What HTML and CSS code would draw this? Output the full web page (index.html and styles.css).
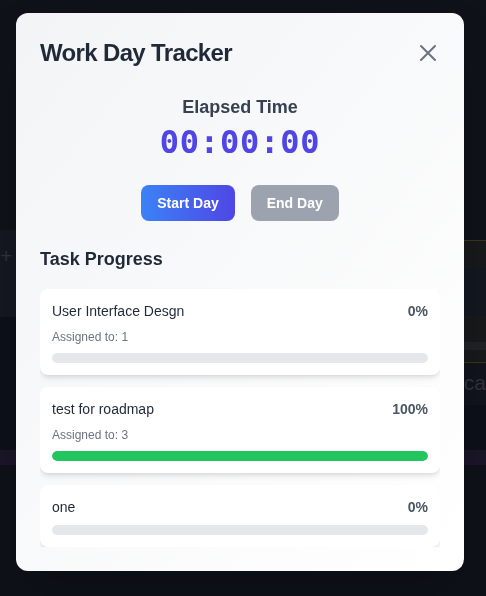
FILE: index.html
```html
<!DOCTYPE html>
<html lang="en">
<head>
<meta charset="utf-8">
<title>Work Day Tracker</title>
<link rel="stylesheet" href="styles.css">
</head>
<body>
<div class="backdrop">
  <div class="bg-col bg-left">
    <div class="bl-space"></div>
    <div class="bl-band"><span class="bg-text">+ A</span></div>
    <div class="bl-dark"></div>
    <div class="bg-purple"></div>
  </div>
  <div class="bg-col bg-right">
    <div class="br-space"></div>
    <div class="br-box">
      <div class="br-b1"></div>
      <div class="br-b2"></div>
      <div class="br-b3"></div>
      <div class="br-b4"></div>
      <div class="br-b5"></div>
    </div>
    <div class="br-text"><span class="bg-text">ca</span></div>
    <div class="br-dark"></div>
    <div class="bg-purple"></div>
  </div>
</div>

<div class="overlay">
  <div class="modal">
    <div class="modal-header">
      <h2 class="modal-title">Work Day Tracker</h2>
      <button class="close-btn" aria-label="Close">
        <svg width="24" height="24" viewBox="0 0 24 24" fill="none" stroke="#6b7280" stroke-width="2" stroke-linecap="round">
          <path d="M5 5L19 19M19 5L5 19"/>
        </svg>
      </button>
    </div>

    <div class="timer-block">
      <div class="timer-label">Elapsed Time</div>
      <div class="timer">00:00:00</div>
    </div>

    <div class="actions">
      <button class="btn btn-start">Start Day</button>
      <button class="btn btn-end">End Day</button>
    </div>

    <h3 class="section-title">Task Progress</h3>

    <div class="task-list">
      <div class="task-card">
        <div class="task-row">
          <span class="task-name">User Interface Desgn</span>
          <span class="task-pct">0%</span>
        </div>
        <div class="task-assigned">Assigned to: 1</div>
        <div class="bar"><div class="bar-fill" style="width:0%"></div></div>
      </div>
      <div class="task-card">
        <div class="task-row">
          <span class="task-name">test for roadmap</span>
          <span class="task-pct">100%</span>
        </div>
        <div class="task-assigned">Assigned to: 3</div>
        <div class="bar"><div class="bar-fill" style="width:100%"></div></div>
      </div>
      <div class="task-card">
        <div class="task-row">
          <span class="task-name">one</span>
          <span class="task-pct">0%</span>
        </div>
        <div class="bar"><div class="bar-fill" style="width:0%"></div></div>
      </div>
    </div>
  </div>
</div>
</body>
</html>
```

FILE: styles.css
```css
* { box-sizing: border-box; }

html, body {
  margin: 0;
  padding: 0;
  height: 100%;
}

body {
  background: #0e1118;
  font-family: "Liberation Sans", Arial, sans-serif;
  overflow: hidden;
}

/* dimmed page behind the modal */
.backdrop {
  display: grid;
  grid-template-columns: 1fr 1fr;
  height: 596px;
}

.bg-col {
  display: flex;
  flex-direction: column;
}

.bl-space { height: 230px; background: #0f1219; }
.bl-band {
  height: 87px;
  background: #151820;
  padding: 14px 0 0 0;
}
.bg-text {
  color: #2e333d;
  font-size: 21px;
  line-height: 24px;
  white-space: nowrap;
}
.bl-dark { height: 133px; background: #0d1018; }
.bg-purple { height: 15px; background: #1a1627; }

.br-space { height: 240px; background: #0f1219; }
.br-box {
  border-top: 1px solid #3d3419;
  border-bottom: 1px solid #3d3419;
}
.br-b1 { height: 27px; background: #18191b; }
.br-b2 { height: 48px; background: #131720; }
.br-b3 { height: 26px; background: #18191b; }
.br-b4 { height: 8px; background: #202226; }
.br-b5 { height: 12px; background: #18191b; }
.br-text {
  height: 42px;
  background: #11141c;
  padding: 8px 0 0 223px;
  overflow: hidden;
}
.br-dark { height: 45px; background: #0d1018; }

/* overlay + modal */
.overlay {
  position: fixed;
  inset: 0;
  display: flex;
  align-items: flex-start;
  padding: 13px 0 0 16px;
}

.modal {
  width: 448px;
  height: 558px;
  border-radius: 12px;
  background: linear-gradient(to bottom right, #f3f4f6, #ffffff);
  padding: 24px;
  display: flex;
  flex-direction: column;
  box-shadow: 0 25px 50px -12px rgba(0,0,0,0.25);
}

.modal-header {
  display: flex;
  align-items: center;
  justify-content: space-between;
  height: 32px;
  margin-bottom: 24px;
}

.modal-title {
  margin: 0;
  font-size: 24px;
  line-height: 32px;
  font-weight: 700;
  color: #1f2937;
  letter-spacing: -0.65px;
}

.close-btn {
  width: 24px;
  height: 24px;
  padding: 0;
  border: 0;
  background: none;
  display: flex;
  align-items: center;
  justify-content: center;
  cursor: pointer;
}

.timer-block {
  text-align: center;
  margin-bottom: 25px;
}

.timer-label {
  font-size: 18px;
  line-height: 28px;
  font-weight: 700;
  color: #374151;
}

.timer {
  margin-top: 3px;
  font-family: "DejaVu Sans Mono", monospace;
  font-weight: 700;
  font-size: 32px;
  line-height: 36px;
  letter-spacing: 0.8px;
  color: #4f46e5;
}

.actions {
  display: flex;
  justify-content: center;
  gap: 16px;
  margin-bottom: 24px;
}

.btn {
  border: 0;
  border-radius: 8px;
  padding: 8px 16px;
  font-family: "Liberation Sans", Arial, sans-serif;
  font-size: 14px;
  line-height: 20px;
  font-weight: 700;
  color: #ffffff;
  cursor: pointer;
}

.btn-start {
  background: linear-gradient(to right, #3b82f6, #4f46e5);
}

.btn-end {
  background: #9ca3af;
}

.section-title {
  margin: 0 0 16px 0;
  font-size: 18px;
  line-height: 28px;
  font-weight: 700;
  color: #1f2937;
}

.task-list {
  display: flex;
  flex-direction: column;
  gap: 12px;
  height: 258px;
  overflow: hidden;
}

.task-card {
  flex-shrink: 0;
  background: #ffffff;
  border-radius: 8px;
  padding: 12px;
  box-shadow: 0 4px 6px -1px rgba(0,0,0,0.1), 0 2px 4px -2px rgba(0,0,0,0.1);
}

.task-row {
  display: flex;
  justify-content: space-between;
  align-items: center;
  height: 20px;
}

.task-name {
  font-size: 14px;
  line-height: 20px;
  color: #1f2937;
}

.task-pct {
  font-size: 14px;
  line-height: 20px;
  font-weight: 700;
  color: #4b5563;
}

.task-assigned {
  margin-top: 8px;
  font-size: 12px;
  line-height: 16px;
  color: #6b7280;
}

.bar {
  margin-top: 8px;
  height: 10px;
  border-radius: 9999px;
  background: #e5e7eb;
  overflow: hidden;
}

.bar-fill {
  height: 100%;
  background: #22c55e;
  border-radius: 9999px;
}
```
